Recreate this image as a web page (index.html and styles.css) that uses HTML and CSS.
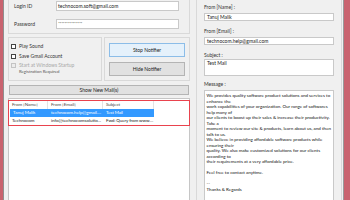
FILE: index.html
```html
<!DOCTYPE html>
<html>
<head>
<meta charset="utf-8">
<link rel="stylesheet" href="styles.css">
</head>
<body>
<div class="win">
  <div class="left">
    <div class="grp g-login">
      <div class="frow"><span class="lbl">Login ID</span><div class="inp">technocom.soft@gmail.com</div></div>
      <div class="frow"><span class="lbl">Password</span><div class="inp pw">***************</div></div>
    </div>
    <div class="mid">
      <div class="grp g-opts">
        <div class="chk"><span class="box"></span>Play Sound</div>
        <div class="chk"><span class="box"></span>Save Gmail Account</div>
        <div class="chk dis"><span class="box"></span>Start at Windows Startup</div>
        <div class="reg">Registration Required</div>
      </div>
      <div class="grp g-btns">
        <div class="btn btn-focus">Stop Notifier</div>
        <div class="btn">Hide Notifier</div>
      </div>
    </div>
    <div class="btn wide">Show New Mail(s)</div>
    <div class="list">
      <div class="hl">
        <div class="lrow head"><span class="c1">From [Name]</span><span class="c2">From [Email]</span><span class="c3">Subject</span></div>
        <div class="lrow sel"><span class="c1">Tanuj Malik</span><span class="c2">technocom.help@gmail....</span><span class="c3">Test Mail</span></div>
        <div class="lrow"><span class="c1">Technocom</span><span class="c2">info@technocomsolutio...</span><span class="c3">Fwd: Query from www....</span></div>
      </div>
    </div>
  </div>
  <div class="grp right">
    <div class="rlbl">From [Name] :</div>
    <div class="inp rinp">Tanuj Malik</div>
    <div class="rlbl">From [Email] :</div>
    <div class="inp rinp">technocom.help@gmail.com</div>
    <div class="rlbl">Subject :</div>
    <div class="inp subj">Test Mail</div>
    <div class="rlbl">Message :</div>
    <div class="inp msg">We provides quality software product solutions and services to
enhance the
work capabilities of your organization. Our range of softwares
help many of
our clients to boost up their sales &amp; increase their productivity.
Take a
moment to review our site &amp; products, learn about us, and then
talk to us.
We believe in providing affordable software products while
ensuring their
quality. We also make customized solutions for our clients
according to
their requirements at a very affordable price.

Feel free to contact anytime.

--
Thanks &amp; Regards</div>
  </div>
</div>
</body>
</html>
```

FILE: styles.css
```css
html, body {
  margin: 0;
  padding: 0;
  background: #f0f0f0;
}
body {
  width: 350px;
  height: 200px;
  overflow: hidden;
  font-family: Lato, "Noto Sans", sans-serif;
  font-size: 5px;
  color: #333;
}
.win {
  box-sizing: border-box;
  width: 350px;
  height: 200px;
  display: flex;
  align-items: stretch;
  gap: 6px;
  padding-left: 5px;
  border-left: 3px solid #c9636f;
  border-right: 6px solid #c9636f;
  box-shadow: inset 1px 0 0 #8f8f8f, inset -1px 0 0 #9a9a9a;
  background: #f0f0f0;
  overflow: hidden;
}
.left {
  width: 182px;
  display: flex;
  flex-direction: column;
}
.grp {
  box-sizing: border-box;
  border: 1px solid #d9d9d9;
}
.g-login {
  border-top: none;
  height: 34px;
  padding: 1px 0 0 5px;
  display: flex;
  flex-direction: column;
  gap: 8px;
}
.frow {
  display: flex;
  align-items: center;
  height: 10px;
}
.lbl {
  width: 42px;
  line-height: 10px;
}
.inp {
  box-sizing: border-box;
  background: #fff;
  border: 1px solid #c9c9c9;
  color: #222;
}
.frow .inp {
  width: 123px;
  height: 10px;
  line-height: 8px;
  padding-left: 1px;
}
.pw {
  letter-spacing: -0.3px;
  font-size: 4.5px;
}
.mid {
  display: flex;
  gap: 2px;
  margin-top: 3px;
  height: 44px;
}
.g-opts {
  width: 94px;
  padding: 3px 0 0 2px;
}
.chk {
  display: flex;
  align-items: center;
  height: 10px;
  line-height: 10px;
}
.box {
  box-sizing: border-box;
  width: 5px;
  height: 5px;
  border: 1px solid #444;
  background: #fff;
  margin-right: 3px;
}
.chk.dis {
  height: 8px;
  color: #a8a8a8;
}
.chk.dis .box {
  border-color: #c4c4c4;
  background: #ececec;
}
.reg {
  margin-left: 8px;
  font-size: 4.3px;
  line-height: 5px;
  color: #555;
}
.g-btns {
  width: 86px;
  padding: 5px 0 0 4px;
  display: flex;
  flex-direction: column;
  gap: 5px;
}
.btn {
  box-sizing: border-box;
  background: #e1e1e1;
  border: 1px solid #b4b4b4;
  text-align: center;
  color: #222;
}
.g-btns .btn {
  width: 76px;
  height: 14px;
  line-height: 12px;
}
.btn-focus {
  background: #e5f1fb;
  border-color: #8cbde8;
}
.wide {
  width: 180px;
  height: 10px;
  line-height: 8px;
  margin: 4px 0 0 1px;
}
.list {
  flex: 1;
  margin-top: 3px;
  background: #fff;
  border: 1px solid #c6c6c6;
  border-bottom: none;
  padding-top: 1px;
}
.hl {
  margin: 0 -1px;
  border: 1px solid #e9434e;
}
.lrow {
  display: flex;
  height: 8px;
  line-height: 8px;
  width: 145px;
  white-space: nowrap;
  font-size: 4.5px;
  color: #222;
}
.lrow span {
  box-sizing: border-box;
  overflow: hidden;
  padding-left: 3px;
}
.c1 { width: 39px; }
.c2 { width: 55px; }
.c3 { width: 51px; letter-spacing: -0.1px; }
.head {
  color: #444;
}
.head span {
  border-right: 1px solid #e3e3e3;
}
.sel {
  background: #3399ff;
  color: #fff;
  margin-left: 1px;
  width: 144px;
}
.sel .c1 { width: 38px; }
.right {
  width: 146px;
  border-top: none;
  border-bottom: none;
  padding-left: 7px;
  padding-top: 4px;
  display: flex;
  flex-direction: column;
}
.rlbl {
  height: 6px;
  line-height: 6px;
  margin-bottom: 3px;
  color: #333;
}
.rinp {
  width: 130px;
  height: 8px;
  line-height: 6px;
  padding-left: 2px;
  margin-bottom: 7px;
}
.subj {
  width: 130px;
  height: 17px;
  line-height: 7px;
  padding-left: 2px;
  margin-top: -2px;
  margin-bottom: 5px;
}
.msg {
  width: 130px;
  flex: 1;
  white-space: pre;
  line-height: 5.5px;
  padding: 2px 0 0 1.5px;
  font-size: 4.5px;
  color: #111;
  overflow: hidden;
  border-bottom: none;
}
```
